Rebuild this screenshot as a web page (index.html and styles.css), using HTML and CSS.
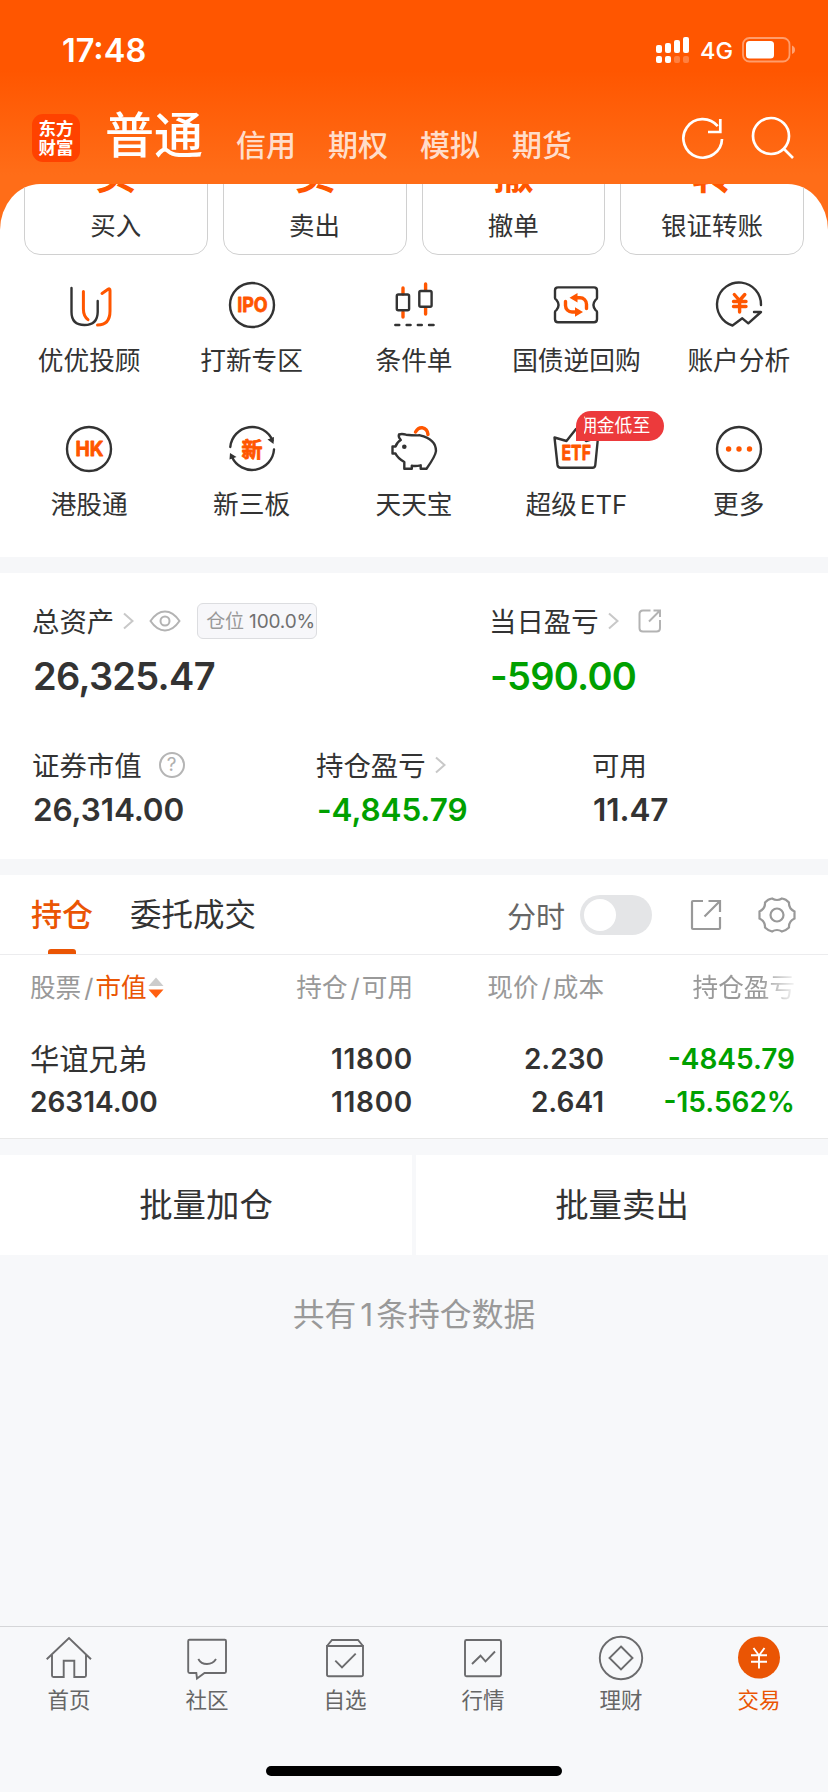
FILE: index.html
```html
<!DOCTYPE html>
<html lang="zh-CN">
<head>
    <meta charset="UTF-8">
    <meta name="viewport" content="width=device-width, initial-scale=1.0">
    <title>交易</title>
    <link rel="stylesheet" href="styles.css">
</head>
<body>

    <header class="header">
        <div class="status-bar">
            <span class="time">17:48</span>
            <svg class="signal" width="34" height="27" fill="#fff">
                <rect x="0" y="8" width="6" height="8" rx="2"/>
                <rect x="9" y="6" width="6" height="10" rx="2"/>
                <rect x="18" y="3" width="6" height="13" rx="2"/>
                <rect x="27" y="0" width="6" height="16" rx="2"/>
                <rect x="0" y="19" width="6" height="7" rx="2"/>
                <rect x="9" y="19" width="6" height="7" rx="2"/>
                <rect x="18" y="19" width="6" height="7" rx="2" opacity=".25"/>
                <rect x="27" y="19" width="6" height="7" rx="2" opacity=".25"/>
            </svg>
            <span class="network">4G</span>
            <svg class="battery" width="54" height="26">
                <rect x="1" y="1" width="46.5" height="23.5" rx="6.5" fill="none" stroke="#fff" stroke-width="1.8" opacity=".42"/>
                <rect x="4" y="4" width="28" height="17.5" rx="3.5" fill="#fff"/>
                <path d="M50 8.5q3 1.2 3 4.3t-3 4.3z" fill="#fff" opacity=".45"/>
            </svg>
        </div>
        <nav class="top-nav">
            <div class="logo"><span>东方</span><span>财富</span></div>
            <span class="nav-item active">普通</span>
            <span class="nav-item">信用</span>
            <span class="nav-item">期权</span>
            <span class="nav-item">模拟</span>
            <span class="nav-item">期货</span>
            <div class="nav-icons">
                <svg width="44" height="44" fill="none" stroke="#fff" stroke-width="2.7">
                    <path d="M41 23a19.3 19.3 0 1 1-4.3-12.8"/>
                    <path d="M39.3 3v13H27"/>
                </svg>
                <svg width="44" height="44" fill="none" stroke="#fff" stroke-width="2.7">
                    <circle cx="20" cy="20" r="18"/>
                    <path d="M32.5 32.5L42 42"/>
                </svg>
            </div>
        </nav>
    </header>

    <div class="sheet">
        <div class="cards">
            <div class="card"><b>买</b><span>买入</span></div>
            <div class="card"><b>卖</b><span>卖出</span></div>
            <div class="card"><b>撤</b><span>撤单</span></div>
            <div class="card"><b>转</b><span>银证转账</span></div>
        </div>
    </div>

    <div class="menu">
        <div class="menu-item">
            <svg class="icon">
                <path d="M10.5 11V35Q10.5 48 23.5 48T36.7 35V24"/>
                <path class="o" d="M22.4 14.5V32Q22.4 39 27 42.7M41 16.5L47 12.3Q49 11 49 13.5V34Q49 48 36.5 48"/>
            </svg>
            <span>优优投顾</span>
        </div>
        <div class="menu-item">
            <svg class="icon">
                <circle cx="28" cy="28" r="22"/>
                <text x="13.2" y="35.2" textLength="30.5" lengthAdjust="spacingAndGlyphs">IPO</text>
            </svg>
            <span>打新专区</span>
        </div>
        <div class="menu-item">
            <svg class="icon">
                <path class="o thick" d="M17 11V17M17 35V40M39.6 7V13M39.6 31V37"/>
                <rect x="10.8" y="17.5" width="12.3" height="15.7" rx="1.5"/>
                <rect x="33.3" y="14" width="12.3" height="15.7" rx="1.5"/>
                <path d="M9.3 48h4M20.6 48h4M31.8 48h4M43 48h4.6"/>
            </svg>
            <span>条件单</span>
        </div>
        <div class="menu-item">
            <svg class="icon">
                <path d="M10 10.4H46Q49 10.4 49 13.4V21Q49 22 47.5 23Q43.4 28 47.5 33Q49 34 49 35V42.2Q49 45.2 46 45.2H10Q7 45.2 7 42.2V35Q7 34 8.5 33Q12.6 28 8.5 23Q7 22 7 21V13.4Q7 10.4 10 10.4Z"/>
                <path class="o thick" d="M28 20.7H32A6.500 6.500 0 0 1 38.500 27.200V31.500M28 35H24A6.500 6.500 0 0 1 17.500 28.500V24.500"/>
                <path class="fo" d="M21.500 20.700l8-4.700v9.400zM35 35l-8-4.700v9.400z"/>
            </svg>
            <span>国债逆回购</span>
        </div>
        <div class="menu-item">
            <svg class="icon">
                <path d="M50 28A22 22 0 1 0 21.5 48.5L31.3 41.3L37.3 46.3L50 35H43"/>
                <path class="o thick" d="M23.3 17.5L28.5 23.5L33.8 17.5M22.5 24.500H35M22.5 29.5H35M28.6 24V35"/>
            </svg>
            <span>账户分析</span>
        </div>
        <div class="menu-item">
            <svg class="icon">
                <circle cx="28" cy="28" r="22"/>
                <text x="14.4" y="35.3" textLength="28" lengthAdjust="spacingAndGlyphs">HK</text>
            </svg>
            <span>港股通</span>
        </div>
        <div class="menu-item">
            <svg class="icon">
                <path d="M6.3 26A22 22 0 0 1 48.5 19.5M50 28.5A22 22 0 0 1 8 36"/>
                <path class="fd" d="M50 16l-6.500 2.500 6 4.500zM6 32l6.500 4-7 2.500z"/>
                <text class="cn" x="17.5" y="36">新</text>
            </svg>
            <span>新三板</span>
        </div>
        <div class="menu-item">
            <svg class="icon">
                <path class="o thick" d="M29.500 11Q32 6.500 36 6.700Q41.500 8 42 13.500"/>
                <path d="M13 13.5Q16 12.500 20 13.700Q27 14.500 34 14.300Q50 18 50 30Q49.500 35 40.500 47.800H34.700V44.300Q30 45.500 25.800 44.800V47.800H18.300V41Q11.500 37 9.500 32.500H6.500V25.500H9.500Q11 21 14.800 19Q12 16 13 13.500Z"/>
                <circle class="fd" cx="18.3" cy="25.7" r="2.3"/>
            </svg>
            <span>天天宝</span>
        </div>
        <div class="menu-item">
            <svg class="icon">
                <path d="M6.500 16.500L18.500 20L28 8L38 20L50 16.500L47.300 44Q47 46.800 44.500 46.800H12.500Q10 46.800 9.500 44Z"/>
                <text x="13.5" y="39.4" textLength="29.5" lengthAdjust="spacingAndGlyphs">ETF</text>
            </svg>
            <span>超级<i>ETF</i></span>
            <div class="badge"><div class="badge-text"><span>佣金低至</span></div></div>
        </div>
        <div class="menu-item">
            <svg class="icon">
                <circle cx="28" cy="28" r="22"/>
                <circle class="fo" cx="17.6" cy="28" r="2.7"/>
                <circle class="fo" cx="28" cy="28" r="2.7"/>
                <circle class="fo" cx="38.5" cy="28" r="2.7"/>
            </svg>
            <span>更多</span>
        </div>
    </div>

    <section class="assets">
        <div class="asset-row main">
            <div class="asset">
                <div class="label">
                    <span>总资产</span>
                    <svg class="chevron" width="11" height="18"><path d="M1 1.5l8.5 7.5L1 16.5"/></svg>
                    <svg class="eye" width="32" height="22">
                        <path d="M1.5 11Q8 1.5 16 1.5T30.5 11Q24 20.5 16 20.5T1.5 11Z"/>
                        <circle cx="16" cy="11" r="4.5"/>
                    </svg>
                    <div class="tag">仓位 <em>100.0%</em></div>
                </div>
                <div class="value">26,325.47</div>
            </div>
            <div class="asset">
                <div class="label">
                    <span>当日盈亏</span>
                    <svg class="chevron" width="11" height="18"><path d="M1 1.5l8.5 7.5L1 16.5"/></svg>
                    <svg class="share-small" width="24" height="24">
                        <path d="M12.5 1.5H5Q1.5 1.5 1.5 5V19Q1.5 22.5 5 22.5H18.5Q22 22.5 22 19V11M15.5 1.5H22V8M22 1.5L11 12.5"/>
                    </svg>
                </div>
                <div class="value green">-590.00</div>
            </div>
        </div>
        <div class="asset-row sub">
            <div class="asset">
                <div class="label"><span>证券市值</span><div class="help">?</div></div>
                <div class="value">26,314.00</div>
            </div>
            <div class="asset">
                <div class="label">
                    <span>持仓盈亏</span>
                    <svg class="chevron" width="11" height="18"><path d="M1 1.5l8.5 7.5L1 16.5"/></svg>
                </div>
                <div class="value green">-4,845.79</div>
            </div>
            <div class="asset">
                <div class="label"><span>可用</span></div>
                <div class="value">11.47</div>
            </div>
        </div>
    </section>

    <section class="positions">
        <div class="tabs">
            <span class="tab active">持仓</span>
            <span class="tab">委托成交</span>
            <div class="tools">
                <span>分时</span>
                <div class="toggle"></div>
                <svg class="share" width="32" height="32">
                    <path d="M13 2H3Q2 2 2 3V29Q2 30 3 30H29Q30 30 30 29V18M18.5 2H30V13M30 2L14.5 17.5"/>
                </svg>
                <svg class="gear" width="38" height="38">
                    <path d="M14 2.5Q19 5.500 24 2.5Q28 3 31 6.500Q30.500 12.500 36.500 15.500V22.500Q30.500 25.500 31 31.500Q28 34.500 24 35.500Q19 32.500 14 35.500Q10 34.500 7 31.500Q7.500 25.500 1.500 22.500V15.500Q7.500 12.500 7 6.500Q10 3 14 2.500Z"/>
                    <circle cx="19" cy="19" r="6.5"/>
                </svg>
            </div>
        </div>
        <div class="table">
            <div class="row head">
                <span>股票<i>/</i><em>市值</em><svg width="16" height="22"><path d="M0.5 9L8 0.5L15.5 9z" fill="#ccc"/><path d="M0.5 12.500L8 21L15.5 12.500z" fill="#ff5f10"/></svg></span>
                <span>持仓<i>/</i>可用</span>
                <span>现价<i>/</i>成本</span>
                <span class="fade">持仓盈亏</span>
            </div>
            <div class="row body">
                <div><span class="name">华谊兄弟</span><span>26314.00</span></div>
                <div class="amount"><span>11800</span><span>11800</span></div>
                <div><span>2.230</span><span>2.641</span></div>
                <div class="green"><span>-4845.79</span><span>-15.562%</span></div>
            </div>
        </div>
    </section>

    <div class="actions">
        <div class="action">批量加仓</div>
        <div class="action">批量卖出</div>
    </div>
    <p class="total">共有<i>1</i>条持仓数据</p>

    <footer class="footer">
        <div class="tabbar">
            <div class="tabbar-item">
                <svg><path d="M1.7 25.3L24 4L46 25.3M7 21V41.5Q7 43 8.5 43H18.7V26.7H29.3V43H39.5Q41 43 41 41.5V21"/></svg>
                <span>首页</span>
            </div>
            <div class="tabbar-item">
                <svg><path d="M6.5 5.7H41.8Q43 5.7 43 7V37.5Q43 39 41.5 39H21.5L14 44.5L13.3 39H6.7Q5.2 39 5.2 37.5V7Q5.2 5.7 6.5 5.7ZM15.3 25Q18 30 24 30T33 25"/></svg>
                <span>社区</span>
            </div>
            <div class="tabbar-item">
                <svg><path d="M6 12V40.5Q6 42.3 7.8 42.3H40.2Q42 42.3 42 40.5V12ZM6 12L11 6H37L42 12M14.3 26.7L21 33.5L34.7 19.7"/></svg>
                <span>自选</span>
            </div>
            <div class="tabbar-item">
                <svg><rect x="6" y="6" width="36" height="36.3" rx="1.5"/><path d="M13 30L21.5 21.7L26.5 27.3L36 17.5"/></svg>
                <span>行情</span>
            </div>
            <div class="tabbar-item">
                <svg><circle cx="24" cy="24" r="21.2"/><path d="M24 12.5L35.5 24L24 35.5L12.5 24Z"/></svg>
                <span>理财</span>
            </div>
            <div class="tabbar-item active">
                <svg><circle class="dot" cx="24" cy="23.5" r="21"/><path d="M18.5 14L24 21.5L29.5 14M16 21.3H32M16 27.7H32M24 21.3V34.5"/></svg>
                <span>交易</span>
            </div>
        </div>
        <div class="home-bar"></div>
    </footer>

</body>
</html>
```

FILE: styles.css
```css
/* Base styling */
* {
    box-sizing: border-box;
}

body {
    display: flex;
    flex-direction: column;
    width: 828px;
    height: 1792px;
    margin: 0;
    font-family: Inter, "Noto Sans CJK SC", sans-serif;
    color: #333;
    background-color: #f7f8fa;
    overflow: hidden;
}

i, em {
    font-style: normal;
}

svg {
    flex: none;
}

.green {
    color: #00a000;
}

/* Header */
.header {
    height: 184px;
    background: linear-gradient(#ff5600 70px, #ff6d18 175px);
    color: #fff;
}

.status-bar {
    display: flex;
    align-items: center;
    height: 100px;
    padding: 0 32px 0 62px;
}

.time {
    font-size: 32.5px;
    font-weight: 600;
    flex: 1;
}

.network {
    margin: 2px 9px 0 10px;
    font-size: 23.5px;
    font-weight: 500;
    line-height: 30px;
}

.top-nav {
    display: flex;
    align-items: flex-end;
    height: 66px;
    padding-left: 32px;
}

.logo {
    display: flex;
    flex-direction: column;
    align-items: center;
    justify-content: center;
    width: 48px;
    height: 48px;
    margin: 0 25px 4px 0;
    border-radius: 11px;
    background-color: #ff4200;
    font-size: 17.5px;
    font-weight: 700;
    line-height: 19px;
}

.nav-item {
    margin-right: 32px;
    font-size: 30px;
    font-weight: 500;
    line-height: 42px;
    color: rgba(255, 255, 255, 0.8);
}

.nav-item.active {
    margin-right: 33px;
    font-size: 49px;
    font-weight: 500;
    line-height: 60px;
    color: #fff;
}

.nav-icons {
    display: flex;
    gap: 26px;
    margin: 0 33px 6px auto;
}

/* Cards under the header */
.sheet {
    height: 72px;
    background: linear-gradient(#ff6d18, #ff6d18) 0 0 / 100% 50px no-repeat;
}

.cards {
    display: flex;
    align-items: flex-end;
    gap: 15px;
    height: 72px;
    padding: 0 24px 1px;
    border-radius: 40px 40px 0 0 / 46px 46px 0 0;
    background-color: #fff;
    overflow: hidden;
}

.card {
    display: flex;
    flex: 1;
    flex-direction: column;
    align-items: center;
    height: 130px;
    padding-top: 27px;
    border: 1.5px solid #d0d0d0;
    border-radius: 16px;
}

.card b {
    font-size: 41px;
    line-height: 42px;
    color: #ff5600;
}

.card span {
    font-size: 25.5px;
    line-height: 36px;
    margin-top: 13px;
}

/* Menu grid */
.menu {
    display: grid;
    grid-template-columns: repeat(5, 1fr);
    grid-auto-rows: 144px;
    height: 301px;
    padding: 21px 8px 0;
    background-color: #fff;
}

.menu-item {
    position: relative;
    display: flex;
    flex-direction: column;
    align-items: center;
    font-size: 25.7px;
    line-height: 36px;
    white-space: nowrap;
}

.menu-item > span {
    margin-top: 10px;
}

.menu-item i {
    margin-left: 3px;
}

.icon {
    width: 56px;
    height: 56px;
    fill: none;
    stroke: #333;
    stroke-width: 2.4;
    stroke-linecap: round;
    stroke-linejoin: round;
}

.icon .o {
    stroke: #ff5600;
    stroke-width: 3;
}

.icon .thick {
    stroke-width: 3.4;
}

.icon .fo {
    fill: #ff5600;
    stroke: none;
}

.icon .fd {
    fill: #333;
    stroke: none;
}

.icon text {
    font-size: 20px;
    font-weight: 700;
    fill: #ff5600;
    stroke: #ff5600;
    stroke-width: 0.8;
}

.icon .cn {
    font-size: 21px;
}

.badge {
    position: absolute;
    left: 81px;
    top: -10px;
    width: 88px;
    height: 30px;
    padding: 0 10px 0 8px;
    border-radius: 15px 15px 15px 0;
    background-color: #ec3a3c;
    color: #fff;
    font-size: 17.8px;
    line-height: 30px;
}

.badge-text {
    display: flex;
    justify-content: flex-end;
    width: 66px;
    overflow: hidden;
}

/* Assets */
.assets {
    height: 318px;
    padding: 28px 32px 0;
    border-top: 16px solid #f6f7f9;
    border-bottom: 16px solid #f6f7f9;
    background-color: #fff;
}

.asset-row {
    display: flex;
    height: 144px;
}

.asset {
    flex: none;
}

.main .asset {
    width: 457px;
}

.main .asset + .asset {
    width: 300px;
}

.sub .asset {
    width: 284px;
}

.sub .asset + .asset {
    width: 276px;
}

.sub .asset:last-child {
    width: 150px;
}

.label {
    display: flex;
    align-items: center;
    height: 40px;
    font-size: 27.4px;
    white-space: nowrap;
}

.label span {
    margin-top: -3px;
}

.label svg {
    fill: none;
    stroke: #b3b3b3;
    stroke-width: 2;
}

.label .chevron {
    margin-left: 9px;
    stroke: #c8c8c8;
}

.label .eye {
    margin-left: 15px;
}

.label .share-small {
    margin-left: 19px;
}

.tag {
    width: 120px;
    height: 36px;
    margin-left: 16px;
    padding-left: 8px;
    border: 1.5px solid #dcdde0;
    border-radius: 6px;
    background-color: #f7f7fa;
    font-size: 19px;
    line-height: 35px;
    letter-spacing: -0.15px;
    color: #999;
}

.tag em {
    color: #707070;
}

.help {
    width: 26px;
    height: 26px;
    margin-left: 17px;
    border: 2px solid #b5b5b5;
    border-radius: 50%;
    font-size: 19px;
    line-height: 22px;
    text-align: center;
    color: #b0b0b0;
}

.value {
    padding-left: 1px;
    font-weight: 600;
    white-space: nowrap;
}

.main .value {
    margin-top: 10px;
    font-size: 38px;
    line-height: 50px;
    letter-spacing: -0.7px;
}

.sub .value {
    margin-top: 4px;
    font-size: 31.5px;
    line-height: 42px;
    letter-spacing: -0.1px;
}

/* Positions */
.positions {
    height: 264px;
    border-bottom: 1px solid #e9e9e9;
    background-color: #fff;
}

.tabs {
    display: flex;
    align-items: center;
    height: 80px;
    padding: 0 32px 0 31px;
    border-bottom: 1px solid #ececee;
}

.tab {
    margin-right: 37px;
    font-size: 31.5px;
    line-height: 79px;
}

.tab.active {
    display: flex;
    flex-direction: column;
    align-items: center;
    height: 79px;
    font-size: 31px;
    font-weight: 500;
    color: #ea5504;
}

.tab.active::after {
    content: "";
    width: 28px;
    height: 5px;
    margin-top: -5px;
    border-radius: 3px 3px 0 0;
    background-color: #ea5504;
    flex: none;
}

.tools {
    display: flex;
    align-items: center;
    margin-left: auto;
    font-size: 29px;
    color: #666;
}

.tools svg {
    fill: none;
    stroke: #999;
    stroke-width: 2.2;
}

.toggle {
    width: 72px;
    height: 40px;
    margin-left: 15px;
    padding: 4px;
    border-radius: 20px;
    background-color: #e4e5e7;
}

.toggle::before {
    content: "";
    display: block;
    width: 32px;
    height: 32px;
    border-radius: 50%;
    background-color: #fff;
}

.share {
    margin-left: 38px;
}

.gear {
    margin-left: 36px;
}

.row {
    display: grid;
    grid-template-columns: 192px 191px 191px 191px;
    padding: 0 33px 0 30px;
    text-align: right;
}

.row > :first-child {
    text-align: left;
}

.head {
    height: 64px;
    font-size: 25.6px;
    line-height: 65px;
    color: #999;
    white-space: nowrap;
}

.head i {
    margin: 0 2px 0 3px;
}

.head em {
    color: #ea5504;
}

.head svg {
    margin-left: 1px;
    vertical-align: -2px;
}

.fade {
    -webkit-mask-image: linear-gradient(to right, #000 82%, transparent 102%);
    mask-image: linear-gradient(to right, #000 82%, transparent 102%);
}

.body {
    padding-top: 19px;
    font-size: 28px;
    font-weight: 600;
    line-height: 43px;
}

.body span {
    display: block;
}

.body .name {
    font-size: 29.3px;
    font-weight: 400;
}

.amount {
    letter-spacing: 0.7px;
}

/* Batch buttons */
.actions {
    display: flex;
    gap: 4px;
    margin-top: 16px;
}

.action {
    flex: 1;
    height: 100px;
    background-color: #fff;
    font-size: 33.4px;
    line-height: 101px;
    text-align: center;
}

.total {
    margin: 38px 0 0;
    font-size: 31.8px;
    line-height: 44px;
    text-align: center;
    color: #999;
}

.total i {
    margin: 0 3px 0 4px;
}

/* Bottom tab bar */
.footer {
    height: 166px;
    margin-top: auto;
    border-top: 1px solid #d5d6d8;
}

.tabbar {
    display: flex;
    height: 139px;
    padding-top: 7px;
}

.tabbar-item {
    display: flex;
    flex: 1;
    flex-direction: column;
    align-items: center;
    font-size: 21.5px;
    line-height: 30px;
    color: #666;
}

.tabbar-item svg {
    width: 48px;
    height: 48px;
    margin-bottom: 3px;
    fill: none;
    stroke: #6b6b6d;
    stroke-width: 1.9;
}

.tabbar-item.active {
    color: #ea5504;
}

.tabbar-item.active svg {
    stroke: #fff;
}

.tabbar-item .dot {
    fill: #ea5504;
    stroke: none;
}

.home-bar {
    width: 296px;
    height: 10px;
    margin: 0 auto;
    border-radius: 5px;
    background-color: #000;
}
```
